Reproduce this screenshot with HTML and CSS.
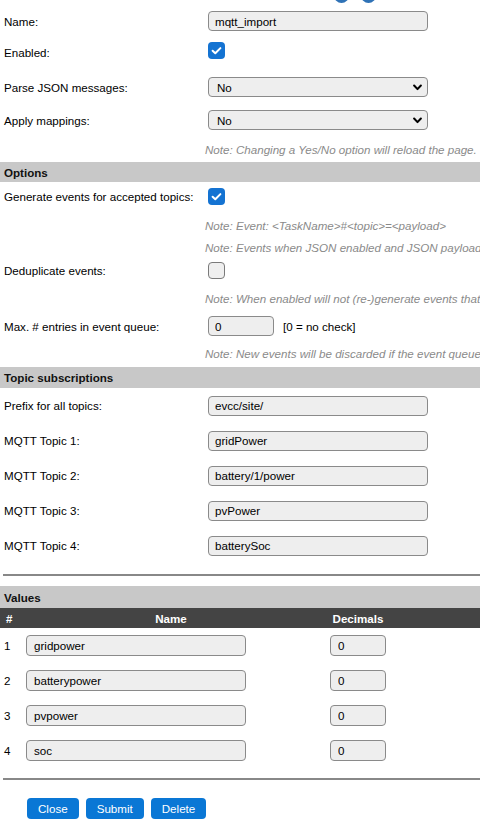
FILE: index.html
```html
<!DOCTYPE html>
<html lang="en">
<head>
<meta charset="utf-8">
<title>mqtt_import</title>
<link rel="stylesheet" href="styles.css">
</head>
<body>
<div class="page">
  <div class="cut-row"><span class="help-btn"></span><span class="help-btn"></span></div>

  <div class="row mt8"><span class="lbl">Name:</span><input class="txt wide" value="mqtt_import"></div>
  <div class="row mt11"><span class="lbl low">Enabled:</span><span class="cb on"><svg viewBox="0 0 17 17" width="17" height="17"><polyline points="4.6,8.7 7.3,11.3 12.4,6.1" fill="none" stroke="#fff" stroke-width="2" stroke-linecap="round" stroke-linejoin="round"/></svg></span></div>
  <div class="row mt18"><span class="lbl">Parse JSON messages:</span>
    <div class="sel-wrap"><select class="sel"><option>No</option></select><svg class="chev" viewBox="0 0 8 6"><polyline points="1,1.2 4,4.4 7,1.2" fill="none" stroke="#000" stroke-width="1.8" stroke-linecap="round" stroke-linejoin="round"/></svg></div>
  </div>
  <div class="row mt13"><span class="lbl">Apply mappings:</span>
    <div class="sel-wrap"><select class="sel"><option>No</option></select><svg class="chev" viewBox="0 0 8 6"><polyline points="1,1.2 4,4.4 7,1.2" fill="none" stroke="#000" stroke-width="1.8" stroke-linecap="round" stroke-linejoin="round"/></svg></div>
  </div>
  <div class="note mt13">Note: Changing a Yes/No option will reload the page.</div>

  <div class="sec h20 mt5">Options</div>
  <div class="row mt6"><span class="lbl">Generate events for accepted topics:</span><span class="cb on"><svg viewBox="0 0 17 17" width="17" height="17"><polyline points="4.6,8.7 7.3,11.3 12.4,6.1" fill="none" stroke="#fff" stroke-width="2" stroke-linecap="round" stroke-linejoin="round"/></svg></span></div>
  <div class="note mt14">Note: Event: &lt;TaskName&gt;#&lt;topic&gt;=&lt;payload&gt;</div>
  <div class="note mt8">Note: Events when JSON enabled and JSON payload is valid, are generated per JSON key</div>
  <div class="row mt7"><span class="lbl">Deduplicate events:</span><span class="cb off"></span></div>
  <div class="note mt13">Note: When enabled will not (re-)generate events that are already in the queue.</div>
  <div class="row mt10"><span class="lbl">Max. # entries in event queue:</span><input class="txt num" value="0"><span class="unit">[0 = no check]</span></div>
  <div class="note mt11">Note: New events will be discarded if the event queue has more entries queued.</div>

  <div class="sec h21 mt6">Topic subscriptions</div>
  <div class="row tall"><span class="lbl">Prefix for all topics:</span><input class="txt wide" value="evcc/site/"></div>
  <div class="row tall"><span class="lbl">MQTT Topic 1:</span><input class="txt wide" value="gridPower"></div>
  <div class="row tall"><span class="lbl">MQTT Topic 2:</span><input class="txt wide" value="battery/1/power"></div>
  <div class="row tall"><span class="lbl">MQTT Topic 3:</span><input class="txt wide" value="pvPower"></div>
  <div class="row tall"><span class="lbl">MQTT Topic 4:</span><input class="txt wide" value="batterySoc"></div>

  <div class="rule mt11"></div>

  <div class="sec h22 mt10">Values</div>
  <div class="vt-head"><span class="c-num">#</span><span class="c-name">Name</span><span class="c-dec">Decimals</span><span></span></div>
  <div class="vt-row"><span class="c-num">1</span><span class="c-name"><input class="txt name-in" value="gridpower"></span><span class="c-dec"><input class="txt dec-in" value="0"></span><span></span></div>
  <div class="vt-row"><span class="c-num">2</span><span class="c-name"><input class="txt name-in" value="batterypower"></span><span class="c-dec"><input class="txt dec-in" value="0"></span><span></span></div>
  <div class="vt-row"><span class="c-num">3</span><span class="c-name"><input class="txt name-in" value="pvpower"></span><span class="c-dec"><input class="txt dec-in" value="0"></span><span></span></div>
  <div class="vt-row"><span class="c-num">4</span><span class="c-name"><input class="txt name-in" value="soc"></span><span class="c-dec"><input class="txt dec-in" value="0"></span><span></span></div>

  <div class="rule mt10"></div>

  <div class="actions">
    <button class="btn">Close</button>
    <button class="btn">Submit</button>
    <button class="btn">Delete</button>
  </div>
</div>
</body>
</html>
```

FILE: styles.css
```css
html, body {
  margin: 0;
  padding: 0;
  background: #fff;
}

body {
  font-family: "Liberation Sans", Arial, sans-serif;
  font-size: 11.6px;
  color: #000;
}

.page {
  width: 480px;
  height: 825px;
  overflow: hidden;
}

/* bottom edge of the help buttons from the row scrolled out of view */
.cut-row {
  height: 3px;
  overflow: hidden;
  display: flex;
  align-items: flex-end;
  padding-left: 334px;
  gap: 12px;
}

.help-btn {
  flex: none;
  width: 15px;
  height: 15px;
  border-radius: 50%;
  background: #2f72b6;
}

.mt5 { margin-top: 5px; }
.mt6 { margin-top: 6px; }
.mt7 { margin-top: 7px; }
.mt8 { margin-top: 8px; }
.mt10 { margin-top: 10px; }
.mt11 { margin-top: 11px; }
.mt13 { margin-top: 13px; }
.mt14 { margin-top: 14px; }
.mt18 { margin-top: 18px; }

.row {
  display: flex;
  align-items: center;
  white-space: nowrap;
}

.row.tall {
  height: 35px;
}

.lbl {
  flex: none;
  width: 208px;
  padding-left: 4px;
  box-sizing: border-box;
}

.lbl.low {
  padding-top: 4px;
}

.txt {
  box-sizing: border-box;
  height: 20px;
  margin: 0;
  padding: 0 6px;
  font: inherit;
  color: #000;
  background: #eee;
  border: 1px solid #8a8a8a;
  border-radius: 4px;
  outline: none;
}

.wide { width: 220px; }
.num { width: 66px; }

.unit {
  margin-left: 9px;
}

.sel-wrap {
  position: relative;
  width: 220px;
  height: 20px;
}

.sel {
  -webkit-appearance: none;
  appearance: none;
  box-sizing: border-box;
  width: 100%;
  height: 100%;
  margin: 0;
  padding: 0 8px;
  font: inherit;
  color: #000;
  background: #eee;
  border: 1px solid #8a8a8a;
  border-radius: 4px;
  outline: none;
}

.chev {
  position: absolute;
  right: 6px;
  top: 7px;
  width: 9px;
  height: 7px;
  pointer-events: none;
}

.cb {
  flex: none;
  box-sizing: border-box;
  width: 17px;
  height: 17px;
  border-radius: 4px;
  display: flex;
}

.cb.on {
  background: #1473d2;
}

.cb.off {
  background: #efefef;
  border: 1px solid #7a7a7a;
}

.note {
  height: 14px;
  line-height: 14px;
  padding-left: 205px;
  font-style: italic;
  color: #8a8a8a;
  white-space: nowrap;
}

.sec {
  display: flex;
  align-items: center;
  padding-left: 4px;
  background: #c8c8c8;
  color: #111;
  font-weight: bold;
}

.h20 { height: 20px; }
.h21 { height: 21px; }
.h22 { height: 22px; }

.rule {
  height: 2px;
  margin-left: 3px;
  background: #888;
}

.vt-head,
.vt-row {
  display: grid;
  grid-template-columns: 22px 298px 76px 1fr;
  align-items: center;
}

.vt-head {
  height: 20px;
  background: #444;
  color: #fff;
  font-weight: bold;
}

.vt-head .c-num { padding-left: 6px; }
.vt-head .c-name,
.vt-head .c-dec { text-align: center; }

.vt-row {
  height: 35px;
}

.vt-row .c-num { padding-left: 4px; }
.vt-row .c-name { padding-left: 4px; display: flex; }
.vt-row .c-dec { display: flex; justify-content: center; }

.name-in {
  width: 220px;
  height: 21px;
  padding: 0 7px;
}

.dec-in {
  width: 56px;
  height: 21px;
  padding: 0 7px;
}

.actions {
  display: flex;
  gap: 7px;
  padding-left: 27px;
  margin-top: 18px;
}

.btn {
  height: 21px;
  padding: 0 11px;
  margin: 0;
  font: inherit;
  color: #fff;
  background: #0a77d5;
  border: none;
  border-radius: 4px;
}
```
